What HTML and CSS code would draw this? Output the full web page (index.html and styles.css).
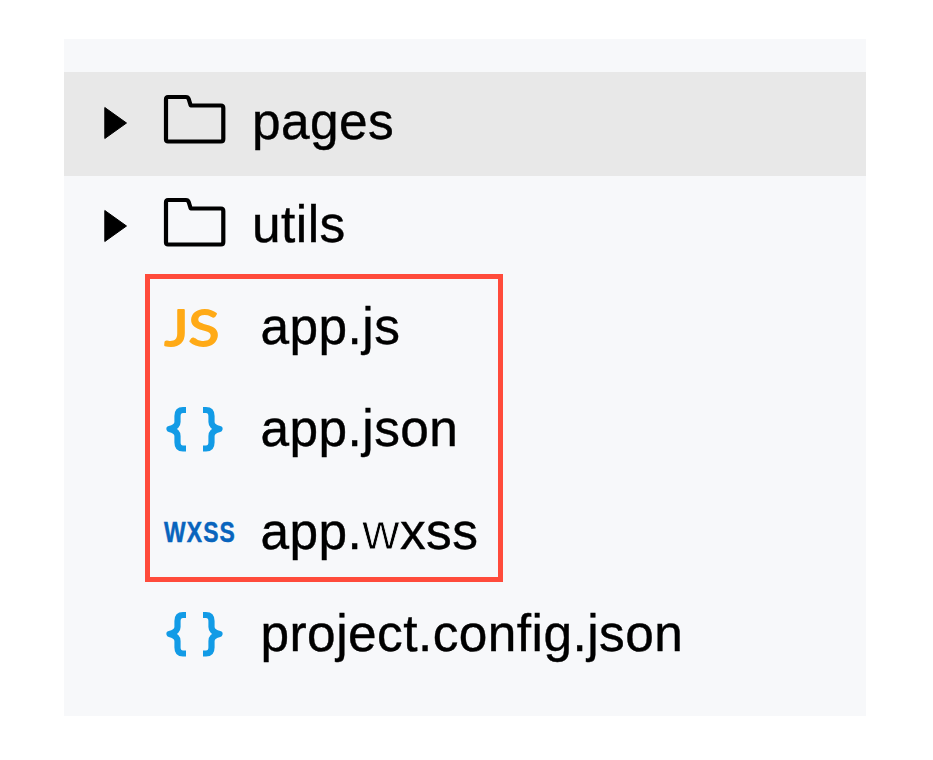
FILE: index.html
```html
<!DOCTYPE html>
<html lang="en">
<head>
<meta charset="utf-8">
<title>Project files</title>
<link rel="stylesheet" href="styles.css">
</head>
<body>
<svg class="defs" width="0" height="0" aria-hidden="true">
  <symbol id="arrow" viewBox="0 0 24 34"><path d="M.8 1.500 22.500 17 .8 32.500Z" fill="#000" stroke="#000" stroke-linejoin="round"/></symbol>
  <symbol id="folder" viewBox="0 0 74 64"><path d="M5 5H23Q25 5 25.700 7L27.700 13.500H58Q60.300 13.500 60.300 16V47Q60.300 49.500 58 49.500H5Q3 49.500 3 47.500V7.500Q3 5 5 5Z" fill="none" stroke="#000" stroke-width="4.200" stroke-linejoin="round"/></symbol>
  <symbol id="braces" viewBox="0 0 74 64"><g fill="none" stroke="#129be6" stroke-width="6.200" stroke-linejoin="round"><path d="M23 10H20Q14.500 10 14.500 16V22Q14.500 27 6.500 29H6.500Q14.500 31 14.500 36V42.500Q14.500 48.500 20 48.500H23"/><path d="M40 10H43Q48.500 10 48.500 16V22Q48.500 27 56.500 29H56.500Q48.500 31 48.500 36V42.500Q48.500 48.500 43 48.500H40"/></g></symbol>
</svg>
<main class="tree">
  <div class="row selected"><svg class="arrow"><use href="#arrow"/></svg><svg class="icon"><use href="#folder"/></svg><span class="name">pages</span></div>
  <div class="row"><svg class="arrow"><use href="#arrow"/></svg><svg class="icon"><use href="#folder"/></svg><span class="name">utils</span></div>
  <section class="group">
    <div class="row file"><svg class="icon" viewBox="0 0 74 64"><text class="js" x="1.500" y="48" textLength="55" lengthAdjust="spacingAndGlyphs">JS</text></svg><span class="name">app.js</span></div>
    <div class="row file"><svg class="icon"><use href="#braces"/></svg><span class="name">app.json</span></div>
    <div class="row file"><svg class="icon" viewBox="0 0 74 64"><text class="wxss" x="1" y="40" textLength="72" lengthAdjust="spacingAndGlyphs">WXSS</text></svg><span class="name">app.<span class="thin">w</span>xss</span></div>
  </section>
  <div class="row file"><svg class="icon"><use href="#braces"/></svg><span class="name">project.config.json</span></div>
</main>
</body>
</html>
```
FILE: styles.css
```css
body {
  margin: 0;
  background: #fff;
  color: #000;
  font-family: "Liberation Sans", Arial, sans-serif;
}
.defs { position: absolute; }
.tree {
  box-sizing: border-box;
  width: 802px;
  height: 677px;
  margin: 39px 0 0 64px;
  padding-top: 33px;
  background: #f7f8fa;
  display: flow-root;
}
.row {
  display: grid;
  grid-template-columns: 59px 89px 1fr;
  align-items: center;
  height: 102.4px;
  padding-left: 40px;
}
.selected { height: 104px; background: #e8e8e8; }
.arrow { width: 24px; height: 34px; margin-bottom: 3px; }
.icon { width: 74px; height: 64px; grid-column: 2; overflow: visible; }
.name {
  padding-bottom: 7px;
  font-size: 51.4px;
  letter-spacing: 0.45px;
  line-height: 60px;
  white-space: nowrap;
  -webkit-text-stroke: 0.4px #000;
}
.file .name { padding-left: 8.5px; }
.thin { -webkit-text-stroke: 0.8px #f7f8fa; }
.group { position: relative; }
.group::after {
  content: "";
  position: absolute;
  box-sizing: border-box;
  left: 81px;
  top: -4.4px;
  width: 358px;
  height: 308px;
  border: 5px solid #ff4b3b;
}
.js {
  font: 400 51px Lato, sans-serif;
  fill: #ffaa16;
  stroke: #ffaa16;
  stroke-width: 1.8;
  stroke-linejoin: round;
}
.wxss {
  font: 700 30px "Liberation Sans", Arial, sans-serif;
  letter-spacing: 1.5px;
  fill: #0864bd;
  stroke: #0864bd;
  stroke-width: 0.5;
}
```
